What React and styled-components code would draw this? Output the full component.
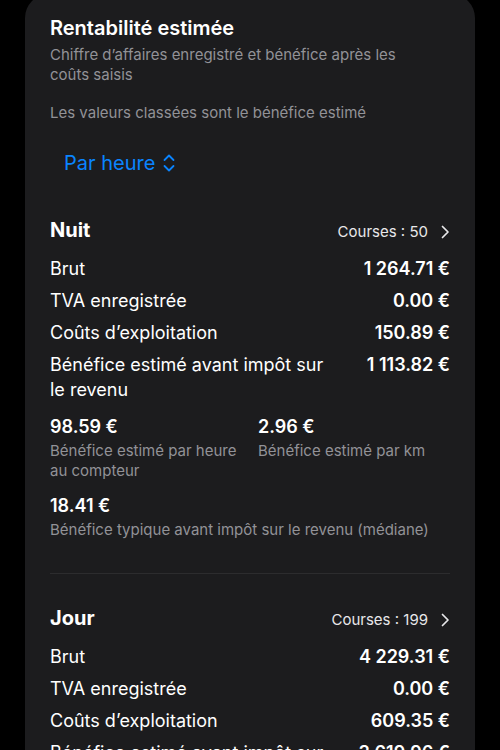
import styled, { createGlobalStyle } from "styled-components";

const GlobalStyle = createGlobalStyle`
  html, body {
    margin: 0;
    padding: 0;
    background: #000;
    overflow: hidden;
  }
  body {
    font-family: Inter, "Noto Sans", "Liberation Sans", sans-serif;
    -webkit-font-smoothing: antialiased;
  }
`;

const sections = [
  {
    name: "Nuit",
    courses: 50,
    rows: [
      ["Brut", "1 264.71 €"],
      ["TVA enregistrée", "0.00 €"],
      ["Coûts d’exploitation", "150.89 €"],
      ["Bénéfice estimé avant impôt sur le revenu", "1 113.82 €"],
    ],
    stats: [
      ["98.59 €", "Bénéfice estimé par heure au compteur"],
      ["2.96 €", "Bénéfice estimé par km"],
      ["18.41 €", "Bénéfice typique avant impôt sur le revenu (médiane)", true],
    ],
  },
  {
    name: "Jour",
    courses: 199,
    rows: [
      ["Brut", "4 229.31 €"],
      ["TVA enregistrée", "0.00 €"],
      ["Coûts d’exploitation", "609.35 €"],
      ["Bénéfice estimé avant impôt sur le revenu", "3 619.96 €"],
    ],
    stats: [],
  },
];

function ChevronRight() {
  return (
    <svg width="9" height="14" viewBox="0 0 9 14" fill="none">
      <path d="M1.5 1.5L7 7l-5.5 5.5" stroke="#e8e8ea" strokeWidth="1.7" strokeLinecap="round" strokeLinejoin="round" />
    </svg>
  );
}

function UpDown() {
  return (
    <svg width="12" height="18" viewBox="0 0 12 18" fill="none">
      <path d="M1.5 6L6 1.5 10.5 6M1.5 12L6 16.5 10.5 12" stroke="#0a84ff" strokeWidth="1.8" strokeLinecap="round" strokeLinejoin="round" />
    </svg>
  );
}

function Section({ data, last }) {
  return (
    <Block>
      <SectionHead>
        <SectionName>{data.name}</SectionName>
        <CoursesLink>
          Courses : {data.courses}
          <ChevronRight />
        </CoursesLink>
      </SectionHead>
      {data.rows.map(([label, value]) => (
        <Row key={label}>
          <RowLabel>{label}</RowLabel>
          <RowValue>{value}</RowValue>
        </Row>
      ))}
      {data.stats.length > 0 && (
        <Stats>
          {data.stats.map(([value, label, wide]) => (
            <Stat key={label} $wide={wide}>
              <StatValue>{value}</StatValue>
              <StatLabel>{label}</StatLabel>
            </Stat>
          ))}
        </Stats>
      )}
      {!last && <Divider />}
    </Block>
  );
}

export default function App() {
  return (
    <>
      <GlobalStyle />
      <Page>
        <Card>
          <Title>Rentabilité estimée</Title>
          <Subtitle>Chiffre d’affaires enregistré et bénéfice après les coûts saisis</Subtitle>
          <Note>Les valeurs classées sont le bénéfice estimé</Note>
          <Picker>
            Par heure
            <UpDown />
          </Picker>
          {sections.map((s, i) => (
            <Section key={s.name} data={s} last={i === sections.length - 1} />
          ))}
        </Card>
      </Page>
    </>
  );
}

const Page = styled.div`
  width: 500px;
  height: 750px;
  background: #000;
  overflow: hidden;
`;

const Card = styled.div`
  margin: -6px 25px 0;
  padding: 22px 25px 40px;
  background: #1c1c1e;
  border-radius: 24px;
  color: #fff;
`;

const Title = styled.div`
  font-size: 20px;
  line-height: 24px;
  font-weight: 600;
  color: #fff;
`;

const Subtitle = styled.div`
  margin-top: 5px;
  font-size: 15px;
  line-height: 20px;
  color: #929297;
  padding-right: 40px;
`;

const Note = styled.div`
  margin-top: 18px;
  font-size: 15px;
  line-height: 20px;
  color: #929297;
`;

const Picker = styled.div`
  margin-top: 28px;
  padding-left: 14px;
  display: flex;
  align-items: center;
  gap: 8px;
  font-size: 20px;
  line-height: 24px;
  color: #0a84ff;
`;

const Block = styled.div`
  margin-top: 43px;
  & + & {
    margin-top: 32px;
  }
`;

const SectionHead = styled.div`
  display: flex;
  align-items: baseline;
  justify-content: space-between;
  margin-bottom: 10px;
`;

const SectionName = styled.div`
  font-size: 20px;
  line-height: 24px;
  font-weight: 700;
`;

const CoursesLink = styled.div`
  display: flex;
  align-items: center;
  gap: 13px;
  font-size: 15px;
  line-height: 20px;
  color: #e8e8ea;
`;

const Row = styled.div`
  display: flex;
  justify-content: space-between;
  align-items: flex-start;
  gap: 30px;
  padding: 3.5px 0;
  font-size: 18px;
  line-height: 25px;
`;

const RowLabel = styled.div`
  flex: 1;
  max-width: 280px;
  color: #fff;
`;

const RowValue = styled.div`
  font-weight: 600;
  white-space: nowrap;
  color: #fff;
`;

const Stats = styled.div`
  margin-top: 11px;
  display: grid;
  grid-template-columns: 1fr 1fr;
  column-gap: 16px;
  row-gap: 14px;
`;

const Stat = styled.div`
  grid-column: ${(p) => (p.$wide ? "1 / -1" : "auto")};
`;

const StatValue = styled.div`
  font-size: 18px;
  line-height: 22px;
  font-weight: 600;
  color: #fff;
`;

const StatLabel = styled.div`
  margin-top: 3px;
  font-size: 15px;
  line-height: 20px;
  color: #929297;
`;

const Divider = styled.div`
  margin-top: 33px;
  height: 1px;
  background: #2c2c2e;
`;
